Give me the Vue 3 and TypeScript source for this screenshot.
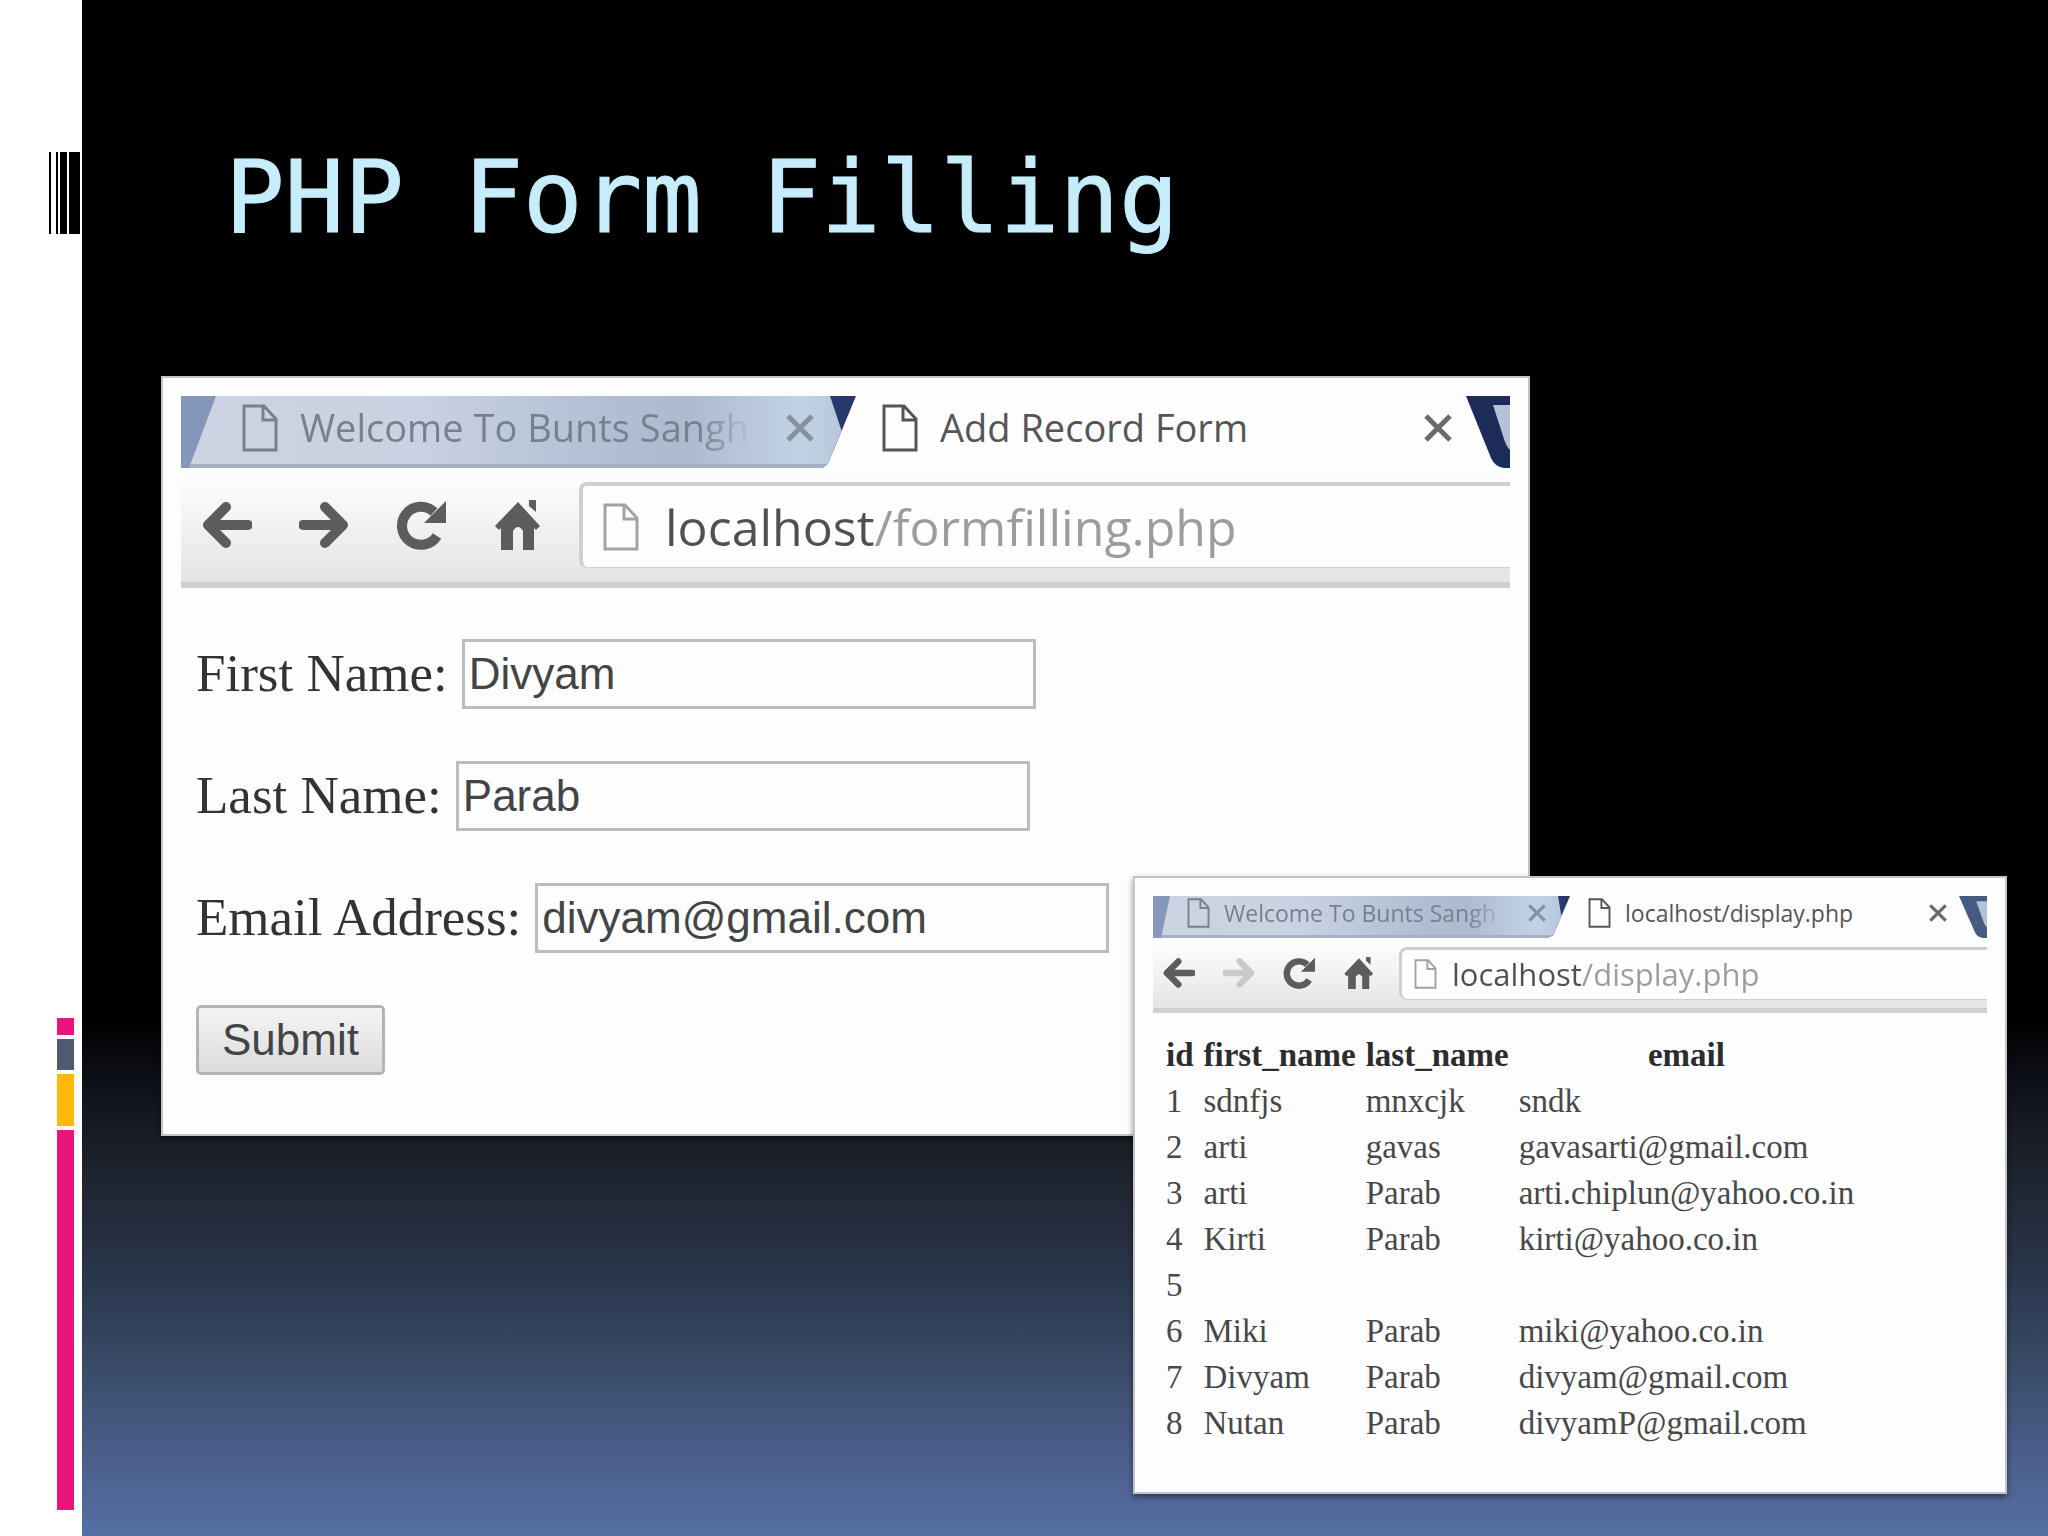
<script setup lang="ts">
import { ref } from 'vue'

interface Shot {
  kind: 'form' | 'display'
  tab: string
  url: string
  canForward: boolean
}

interface Person {
  id: number
  first: string
  last: string
  email: string
}

const shots: Shot[] = [
  { kind: 'form', tab: 'Add Record Form', url: 'localhost/formfilling.php', canForward: true },
  { kind: 'display', tab: 'localhost/display.php', url: 'localhost/display.php', canForward: false },
]

const fields = ref([
  { id: 'first', label: 'First Name:', value: 'Divyam' },
  { id: 'last', label: 'Last Name:', value: 'Parab' },
  { id: 'email', label: 'Email Address:', value: 'divyam@gmail.com' },
])

const people: Person[] = [
  { id: 1, first: 'sdnfjs', last: 'mnxcjk', email: 'sndk' },
  { id: 2, first: 'arti', last: 'gavas', email: 'gavasarti@gmail.com' },
  { id: 3, first: 'arti', last: 'Parab', email: 'arti.chiplun@yahoo.co.in' },
  { id: 4, first: 'Kirti', last: 'Parab', email: 'kirti@yahoo.co.in' },
  { id: 5, first: '', last: '', email: '' },
  { id: 6, first: 'Miki', last: 'Parab', email: 'miki@yahoo.co.in' },
  { id: 7, first: 'Divyam', last: 'Parab', email: 'divyam@gmail.com' },
  { id: 8, first: 'Nutan', last: 'Parab', email: 'divyamP@gmail.com' },
]
</script>

<template>
  <main class="slide">
    <aside class="rail" aria-hidden="true">
      <div class="barcode"><i class="b1"></i><i class="b2"></i><i class="b3"></i><i class="b4"></i></div>
      <div class="blocks">
        <i class="pink short"></i><i class="slate"></i><i class="amber"></i><i class="pink tall"></i>
      </div>
    </aside>

    <section class="stage">
      <h1>PHP Form Filling</h1>

      <div class="shots">
        <article v-for="s in shots" :key="s.kind" class="shot" :class="s.kind">
          <div class="strip">
            <div class="tab old">
              <svg class="page" viewBox="0 0 36 48"><path d="M2 2H22L34 15V46H2Z M21 2V16H34" /></svg>
              <span class="name">Welcome To Bunts Sangh</span>
              <button class="close" type="button" aria-label="Close tab">
                <svg viewBox="0 0 28 28"><path d="M2 2L26 26M26 2L2 26" /></svg>
              </button>
            </div>
            <div class="tab active">
              <svg class="page" viewBox="0 0 36 48"><path d="M2 2H22L34 15V46H2Z M21 2V16H34" /></svg>
              <span class="name">{{ s.tab }}</span>
              <button class="close" type="button" aria-label="Close tab">
                <svg viewBox="0 0 28 28"><path d="M2 2L26 26M26 2L2 26" /></svg>
              </button>
            </div>
            <svg class="next" viewBox="0 0 44 72" preserveAspectRatio="none">
              <path class="navy" d="M0 0H44V72H38Q29 71 25 62Z" />
              <path class="pale" d="M27 9H44V54Q40 50 38 43Z" />
            </svg>
          </div>

          <div class="toolbar">
            <div class="nav">
              <button type="button" aria-label="Back">
                <svg viewBox="0 0 50 50"><path class="line" d="M46 25H8M24 7L6 25L24 43" /></svg>
              </button>
              <button type="button" aria-label="Forward" :disabled="!s.canForward">
                <svg viewBox="0 0 50 50"><path class="line" d="M4 25H42M26 7L44 25L26 43" /></svg>
              </button>
              <button type="button" aria-label="Reload">
                <svg viewBox="0 0 50 50">
                  <path class="arc" d="M41 36A19 19 0 1 1 38 12" />
                  <path class="solid" d="M50 1V23H28Z" />
                </svg>
              </button>
              <button type="button" aria-label="Home">
                <svg viewBox="0 0 50 50">
                  <path class="solid" d="M25 2L47 26L43 30L41 28V50H30V31Q25 23 20 31V50H8V28L6 30L2 26ZM36 0H43V12L36 6Z" />
                </svg>
              </button>
            </div>
            <label class="address">
              <svg class="page" viewBox="0 0 36 48"><path d="M2 2H22L34 15V46H2Z M21 2V16H34" /></svg>
              <input type="text" aria-label="Address" :value="s.url" />
            </label>
          </div>

          <form v-if="s.kind === 'form'" class="record" @submit.prevent>
            <div v-for="f in fields" :key="f.id" class="row">
              <label :for="f.id">{{ f.label }}</label>
              <input :id="f.id" v-model="f.value" type="text" />
            </div>
            <button class="submit" type="submit">Submit</button>
          </form>

          <div v-else class="listing">
            <table>
              <thead>
                <tr><th>id</th><th>first_name</th><th>last_name</th><th>email</th></tr>
              </thead>
              <tbody>
                <tr v-for="p in people" :key="p.id">
                  <td>{{ p.id }}</td><td>{{ p.first }}</td><td>{{ p.last }}</td><td>{{ p.email }}</td>
                </tr>
              </tbody>
            </table>
          </div>
        </article>
      </div>
    </section>
  </main>
</template>

<style>
body {
  margin: 0;
  background: #000;
}
</style>

<style scoped>
* {
  box-sizing: border-box;
}

.slide {
  display: flex;
  min-height: 100vh;
  background: #fff;
}

button {
  padding: 0;
  border: 0;
  background: none;
  font: inherit;
}

/* Left rail */
.rail {
  display: flex;
  flex: none;
  flex-direction: column;
  justify-content: space-between;
  width: 82px;
  padding: 152px 0 26px;
  border-bottom: 1px solid #a8a8a8;
}

.barcode {
  display: flex;
  height: 82px;
  margin-left: 49px;
}

.barcode i {
  background: #000;
}

.b1 { width: 2px; margin-right: 5px; }
.b2 { width: 2px; margin-right: 2px; }
.b3 { width: 7px; margin-right: 2px; }
.b4 { width: 11px; }

.blocks {
  display: flex;
  flex-direction: column;
  gap: 4px;
  width: 17px;
  margin-left: 57px;
}

.pink { background: #ea157a; }
.slate { height: 31px; background: #4e5b6f; }
.amber { height: 52px; background: #feb80a; }
.short { height: 17px; }
.tall { height: 380px; }

/* Slide area */
.stage {
  flex: 1;
  min-width: 0;
  padding-top: 138px;
  background: linear-gradient(
    #000 0%, #000 66%, #10131b 71%, #1f2631 77%, #2a364b 83%,
    #3a4c69 89%, #4a5c87 94%, #5470a4 100%
  );
}

h1 {
  margin: 0 0 118px;
  padding-left: 143px;
  color: #c6edfc;
  font: 400 99px/120px "DejaVu Sans Mono", monospace;
  -webkit-text-stroke: 1px #c6edfc;
  white-space: pre;
}

.shots {
  display: grid;
  grid-template-columns: 79px 972fr 397fr 477fr 41px;
  align-items: start;
  padding-bottom: 43px;
}

.shot {
  --ink: #5c5c5c;
  grid-row: 1;
  min-width: 0;
  padding: 18px;
  border: 2px solid #c4c4c8;
  background: #fefdfe;
  box-shadow: 0 3px 6px rgb(0 0 0 / 45%);
}

.shot.form {
  --strip: 72px;
  --lift: 8px;
  --old: 675px;
  --slant: 28px;
  --edge: 35px;
  --notch: 26px;
  --next: 44px;
  --tab-text: 38px;
  --page-w: 36px;
  --page-h: 48px;
  --tab-pad: 61px;
  --active-pad: 26px;
  --tab-gap: 22px;
  --close: 28px;
  --close-old: 42px;
  --close-gap: 14px;
  --active-end: 14px;
  --bar: 120px;
  --bar-line: 6px;
  --nav: 398px;
  --nav-pad: 21px;
  --nav-gap: 47px;
  --icon: 50px;
  --box: 86px;
  --rule: 4px;
  --url: 50px;
  --url-pad: 20px;
  --url-gap: 26px;
  --host: 209px;
  grid-column: 2 / 4;
}

.shot.display {
  --strip: 42px;
  --lift: 8px;
  --old: 417px;
  --slant: 17px;
  --edge: 17px;
  --notch: 12px;
  --next: 28px;
  --tab-text: 23px;
  --page-w: 23px;
  --page-h: 30px;
  --tab-pad: 34px;
  --active-pad: 18px;
  --tab-gap: 14px;
  --close: 18px;
  --close-old: 24px;
  --close-gap: 12px;
  --active-end: 12px;
  --bar: 75px;
  --bar-line: 5px;
  --nav: 246px;
  --nav-pad: 10px;
  --nav-gap: 28px;
  --icon: 32px;
  --box: 53px;
  --rule: 3px;
  --url: 31px;
  --url-pad: 12px;
  --url-gap: 15px;
  --host: 130px;
  grid-column: 3 / 5;
  margin-top: 500px;
}

/* Tabs */
.strip {
  display: flex;
  height: var(--strip);
  font: 400 var(--tab-text)/1 "Open Sans", "Noto Sans", sans-serif;
}

.tab {
  display: flex;
  align-items: center;
  min-width: 0;
  padding-bottom: var(--lift);
  color: #555;
}

.tab .page {
  flex: none;
  width: var(--page-w);
  height: var(--page-h);
  margin-right: var(--tab-gap);
}

.page path {
  fill: none;
  stroke: currentColor;
  stroke-width: 3;
}

.name {
  flex: 1;
  min-width: 0;
  overflow: hidden;
  line-height: 1.4;
  white-space: nowrap;
}

.close {
  display: block;
  flex: none;
  width: var(--close);
  height: var(--close);
  color: #6a6a6a;
}

.close svg {
  display: block;
}

.close path {
  fill: none;
  stroke: currentColor;
  stroke-width: 5;
}

.old {
  position: relative;
  z-index: 0;
  flex: none;
  width: var(--old);
  padding-right: var(--close-old);
  padding-left: var(--tab-pad);
  background: linear-gradient(90deg, #8598bb, #7c8fb5 50%, #2b3e74 94%, #26366a);
  clip-path: polygon(0 0, 100% 0, calc(100% - var(--slant)) 94%, calc(100% - var(--slant) - 6px) 100%, 0 100%);
  color: #77808f;
}

.old::before {
  position: absolute;
  z-index: -1;
  inset: 0;
  border-bottom: var(--rule) solid #a7b0c1;
  background: linear-gradient(90deg, #ccd3e2, #c9d2e2 35%, #b2bdd3 65%, #adbacf 75%, #c2d3e6 92%, #b3c3d8);
  clip-path: polygon(var(--edge) 0, calc(100% - var(--notch)) 0, calc(100% - var(--slant) / 2) 50%, calc(100% - var(--slant)) 100%, 8px 100%);
  content: "";
}

.old .name {
  margin-right: var(--close-gap);
  mask-image: linear-gradient(90deg, #000 84%, transparent 96%);
}

.old .close {
  color: #8691a1;
}

.active {
  flex: 1;
  padding-right: var(--active-end);
  padding-left: var(--active-pad);
}

.next {
  flex: none;
  width: var(--next);
  height: 100%;
}

.navy { fill: #1c2c58; }
.pale { fill: #b4c2d6; }
.display .navy { fill: #465a82; }

/* Toolbar */
.toolbar {
  display: flex;
  align-items: center;
  height: var(--bar);
  border-bottom: var(--bar-line) solid #cfcfd0;
  background: linear-gradient(#fefefe, #f6f6f6 35%, #e5e4e5);
}

.nav {
  display: flex;
  flex: none;
  gap: var(--nav-gap);
  width: var(--nav);
  padding-left: var(--nav-pad);
}

.nav button {
  flex: none;
  width: var(--icon);
  height: var(--icon);
  color: var(--ink);
}

.nav button:disabled {
  color: #c9c9c9;
}

.nav svg {
  display: block;
}

.line,
.arc {
  fill: none;
  stroke: currentColor;
  stroke-width: 10;
}

.line {
  stroke-linecap: round;
  stroke-linejoin: round;
}

.solid {
  fill: currentColor;
}

.address {
  display: flex;
  flex: 1;
  align-items: center;
  min-width: 0;
  height: var(--box);
  padding-left: var(--url-pad);
  border: solid #cfced0;
  border-width: var(--rule) 0 1px var(--rule);
  border-radius: 8px 0 0 8px;
  background: #fefefe;
  color: #a2a2a2;
}

.address .page {
  flex: none;
  width: var(--page-w);
  height: var(--page-h);
  margin-right: var(--url-gap);
}

.address input {
  flex: 1;
  min-width: 0;
  height: 100%;
  padding: 0;
  border: 0;
  background: linear-gradient(90deg, #505050 var(--host), #9c9c9c var(--host));
  background-clip: text;
  color: transparent;
  font: 400 var(--url)/1 "Open Sans", "Noto Sans", sans-serif;
}

/* Record form */
.record {
  display: flex;
  flex-direction: column;
  gap: 52px;
  align-items: flex-start;
  padding: 51px 0 41px 15px;
}

.row {
  display: flex;
  gap: 14px;
  align-items: center;
}

.row label {
  padding-bottom: 3px;
  color: #333;
  font: 400 53px/60px "Liberation Serif", serif;
}

.row input {
  width: 574px;
  height: 70px;
  padding: 0 4px;
  border: 3px solid #bcbbbe;
  background: #fefdfe;
  color: #444;
  font: 400 44px/60px "Liberation Sans", sans-serif;
}

.submit {
  width: 189px;
  height: 70px;
  border: 3px solid #b4b3b4;
  border-radius: 5px;
  background: linear-gradient(#f5f5f5, #dcdadc);
  color: #444;
  font: 400 44px/60px "Liberation Sans", sans-serif;
}

/* Record list */
.listing {
  padding: 19px 0 28px 13px;
}

table {
  border-collapse: collapse;
  color: #484848;
  font: 400 33px/46px "Liberation Serif", serif;
}

th {
  color: #2c2c2c;
}

th,
td {
  height: 46px;
  padding: 0 10px 0 0;
  text-align: left;
}

th:last-child {
  padding: 0;
  text-align: center;
}

td:last-child {
  padding: 0;
}
</style>
